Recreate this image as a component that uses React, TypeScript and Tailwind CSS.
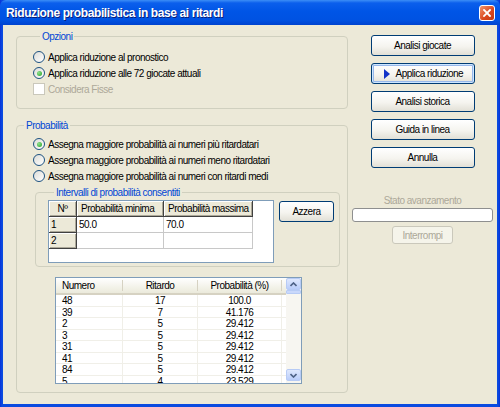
import React from 'react'

type Row = { numero: string; ritardo: string; prob: string }

const rows: Row[] = [
  { numero: '48', ritardo: '17', prob: '100.0' },
  { numero: '39', ritardo: '7', prob: '41.176' },
  { numero: '2', ritardo: '5', prob: '29.412' },
  { numero: '3', ritardo: '5', prob: '29.412' },
  { numero: '31', ritardo: '5', prob: '29.412' },
  { numero: '41', ritardo: '5', prob: '29.412' },
  { numero: '84', ritardo: '5', prob: '29.412' },
  { numero: '5', ritardo: '4', prob: '23.529' },
]

function Radio({ checked, label }: { checked?: boolean; label: string }) {
  return (
    <div className="flex h-[16px] items-center">
      <span className="flex h-[12px] w-[12px] items-center justify-center rounded-full border border-[#1c5180] bg-[linear-gradient(135deg,#dcdcd7,#ffffff)]">
        {checked && (
          <span className="h-[5px] w-[5px] rounded-full bg-[radial-gradient(circle_at_35%_35%,#8fe08f,#21a121)]" />
        )}
      </span>
      <span className="ml-[3px] whitespace-nowrap">{label}</span>
    </div>
  )
}

function XpButton({
  label,
  isDefault,
  className = 'w-[104px]',
}: {
  label: string
  isDefault?: boolean
  className?: string
}) {
  return (
    <div
      className={`flex h-[21px] items-center rounded-[3px] border border-[#003c74] bg-[linear-gradient(180deg,#ffffff_0%,#f5f4ef_55%,#e2e0d6_100%)] ${
        isDefault
          ? 'shadow-[inset_0_0_0_1px_#cee7ff,inset_0_0_0_2px_#98b8ea]'
          : 'justify-center'
      } ${className}`}
    >
      {isDefault ? (
        <>
          <svg width="6" height="10" viewBox="0 0 6 10" className="ml-[12px]">
            <polygon points="0,0 6,5 0,10" fill="#1434c8" />
          </svg>
          <span className="ml-[6px] whitespace-nowrap">{label}</span>
        </>
      ) : (
        <span className="whitespace-nowrap">{label}</span>
      )}
    </div>
  )
}

function HeadCell({ children, className = '' }: { children?: React.ReactNode; className?: string }) {
  return (
    <div
      className={`flex h-[16px] items-center whitespace-nowrap border-r border-b border-[#404040] bg-[#ece9d8] shadow-[inset_1px_1px_0_#ffffff,inset_-1px_-1px_0_#aca899] ${className}`}
    >
      {children}
    </div>
  )
}

function DataCell({ children, className = '' }: { children?: React.ReactNode; className?: string }) {
  return (
    <div className={`flex h-[16px] items-center border-r border-b border-[#c8c8c8] bg-white pl-[2px] ${className}`}>
      {children}
    </div>
  )
}

function IntervalGrid() {
  return (
    <div className="h-[63px] w-[226px] overflow-hidden border border-[#7f9db9] bg-white">
      <div className="flex">
        <HeadCell className="w-[28px] justify-center">Nº</HeadCell>
        <HeadCell className="w-[87px] pl-[4px]">Probabilità minima</HeadCell>
        <HeadCell className="w-[89px] pl-[4px]">Probabilità massima</HeadCell>
      </div>
      <div className="flex">
        <HeadCell className="w-[28px] pl-[2px]">1</HeadCell>
        <DataCell className="w-[87px]">50.0</DataCell>
        <DataCell className="w-[89px]">70.0</DataCell>
      </div>
      <div className="flex">
        <HeadCell className="w-[28px] pl-[2px]">2</HeadCell>
        <DataCell className="w-[87px]" />
        <DataCell className="w-[89px]" />
      </div>
    </div>
  )
}

function Chevron({ up }: { up?: boolean }) {
  return (
    <svg width="7" height="5" viewBox="0 0 7 5">
      <polyline
        points={up ? '0.5,4 3.5,1 6.5,4' : '0.5,1 3.5,4 6.5,1'}
        fill="none"
        stroke="#4d6185"
        strokeWidth="1.6"
      />
    </svg>
  )
}

function ResultList() {
  return (
    <div className="flex h-[107px] w-[247px] border border-[#7f9db9] bg-white">
      <div className="flex-1 overflow-hidden">
        <div className="flex h-[17px] items-center border-b-2 border-[#d6d2c2] bg-[linear-gradient(180deg,#ffffff,#ebeadb)]">
          <div className="w-[66px] pl-[6px]">Numero</div>
          <span className="h-[11px] w-px bg-[#d6d2c2]" />
          <div className="w-[74px] text-center">Ritardo</div>
          <span className="h-[11px] w-px bg-[#d6d2c2]" />
          <div className="w-[83px] text-center">Probabilità (%)</div>
          <span className="h-[11px] w-px bg-[#d6d2c2]" />
        </div>
        {rows.map((r, i) => (
          <div key={i} className="flex h-[11.5px] leading-[11.5px]">
            <div className="w-[67px] border-r border-b border-[#f0efe8] pl-[6px]">{r.numero}</div>
            <div className="w-[75px] border-r border-b border-[#f0efe8] text-center">{r.ritardo}</div>
            <div className="w-[84px] border-r border-b border-[#f0efe8] text-center">{r.prob}</div>
            <div className="flex-1 border-b border-[#f0efe8]" />
          </div>
        ))}
      </div>
      <div className="flex w-[15px] flex-col bg-[#f7f6f1] pb-[2px]">
        <div className="flex h-[12px] items-center justify-center rounded-[2px] border border-[#b7cbf5] bg-[linear-gradient(180deg,#dfe8fd,#b9cdfa)]">
          <Chevron up />
        </div>
        <div className="h-[4px] rounded-[1px] border border-[#b7cbf5] bg-[#c9d8fb]" />
        <div className="flex-1" />
        <div className="flex h-[12px] items-center justify-center rounded-[2px] border border-[#b7cbf5] bg-[linear-gradient(180deg,#dfe8fd,#b9cdfa)]">
          <Chevron />
        </div>
      </div>
    </div>
  )
}

export default function App() {
  return (
    <div className="flex h-[407px] w-[500px] flex-col bg-[linear-gradient(90deg,#0831d9,#0a4be0_2px,#0a4be0_calc(100%-2px),#0831d9)] font-['Liberation_Sans',Arial,sans-serif] text-[10px] tracking-[-0.5px] text-black">
      {/* title bar */}
      <div className="flex h-[25px] shrink-0 items-center justify-between rounded-t-[6px] bg-[linear-gradient(180deg,#3c8ef6_0%,#0b5fec_12%,#0055e6_45%,#0052e2_80%,#0043cf_100%)] pr-[5px] pl-[6px]">
        <span className="text-[12px] font-bold tracking-[-0.4px] text-white [text-shadow:1px_1px_0_#0a1e7a]">
          Riduzione probabilistica in base ai ritardi
        </span>
        <div className="flex h-[16px] w-[16px] items-center justify-center rounded-[3px] border border-white bg-[linear-gradient(135deg,#f0946c,#d9451c_60%,#c23a12)]">
          <svg width="8" height="8" viewBox="0 0 8 8">
            <path d="M1 1 L7 7 M7 1 L1 7" stroke="#ffffff" strokeWidth="1.8" strokeLinecap="square" />
          </svg>
        </div>
      </div>

      {/* client area */}
      <div className="mx-[3px] mb-[3px] flex flex-1 bg-[#ece9d8]">
        {/* left column */}
        <div className="ml-[13px] w-[332px]">
          <fieldset className="mt-[5px] h-[79px] rounded-[4px] border border-[#d0d0bf] pt-[6px] pl-[16px]">
            <legend className="ml-[7px] px-[2px] leading-[13px] text-[#0046d5]">Opzioni</legend>
            <Radio label="Applica riduzione al pronostico" />
            <Radio checked label="Applica riduzione alle 72 giocate attuali" />
            <div className="flex h-[16px] items-center text-[#aca899]">
              <span className="h-[12px] w-[12px] border border-[#cac8bb] bg-white" />
              <span className="ml-[3px]">Considera Fisse</span>
            </div>
          </fieldset>

          <fieldset className="mt-[10px] h-[274px] rounded-[4px] border border-[#d0d0bf] pt-[4px]">
            <legend className="ml-[7px] px-[2px] leading-[13px] text-[#0046d5]">Probabilità</legend>
            <div className="pl-[16px]">
              <Radio checked label="Assegna maggiore probabilità ai numeri più ritardatari" />
              <Radio label="Assegna maggiore probabilità ai numeri meno ritardatari" />
              <Radio label="Assegna maggiore probabilità ai numeri con ritardi medi" />
            </div>

            <fieldset className="mt-[2px] ml-[18px] h-[81px] w-[305px] rounded-[4px] border border-[#d0d0bf] pt-px pl-[12px]">
              <legend className="ml-[6px] px-[2px] leading-[13px] text-[#0046d5]">
                Intervalli di probabilità consentiti
              </legend>
              <div className="flex items-start">
                <IntervalGrid />
                <XpButton label="Azzera" className="mt-px ml-[5px] h-[19px] w-[55px]" />
              </div>
            </fieldset>

            <div className="mt-[10px] ml-[38px]">
              <ResultList />
            </div>
          </fieldset>
        </div>

        {/* right column */}
        <div className="ml-[4px] flex w-[141px] flex-col items-center pt-[10px]">
          <div className="flex flex-col gap-[7px]">
            <XpButton label="Analisi giocate" />
            <XpButton label="Applica riduzione" isDefault />
            <XpButton label="Analisi storica" />
            <XpButton label="Guida in linea" />
            <XpButton label="Annulla" />
          </div>
          <div className="mt-[26px] leading-[13px] text-[#aca899]">Stato avanzamento</div>
          <div className="mt-px h-[14px] w-[141px] rounded-[3px] border border-[#8e8f8f] bg-white" />
          <div className="mt-[4px] flex h-[18px] w-[61px] items-center justify-center rounded-[3px] border border-[#cac8bb] bg-[#f5f4ea] text-[#aca899]">
            Interrompi
          </div>
        </div>
      </div>
    </div>
  )
}
